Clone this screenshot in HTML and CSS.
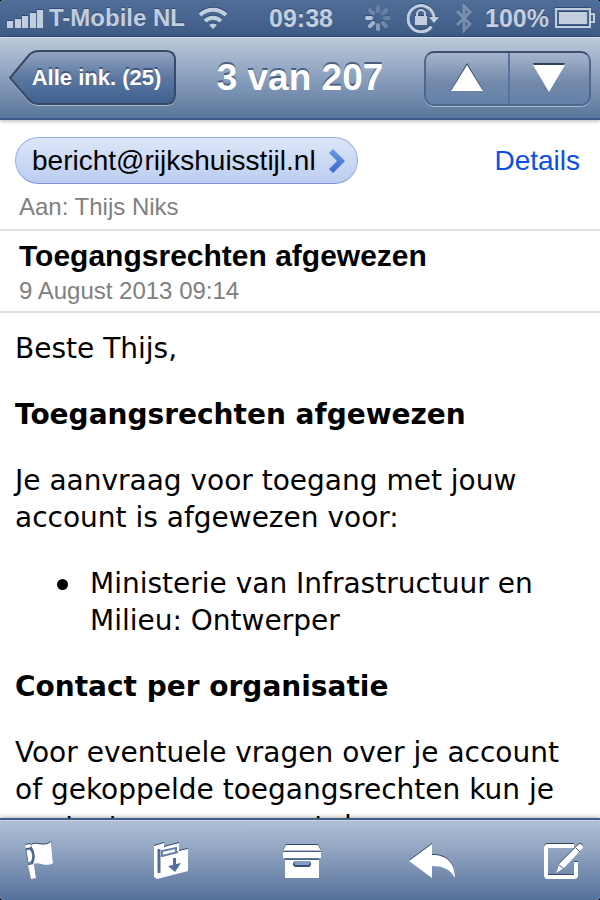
FILE: index.html
```html
<!DOCTYPE html>
<html lang="nl">
<head>
<meta charset="utf-8">
<title>Mail</title>
<link rel="stylesheet" href="styles.css">
</head>
<body>
<div class="phone">
  <div class="status">
    <div class="status-group">
      <svg class="signal" width="37" height="19" viewBox="0 0 37 19"><path d="M0 12h6v7H0zM8 10h6v9H8zM15 7h6v12h-6zM23 4h6v15h-6zM30 1h6v18h-6z"/></svg>
      <span class="carrier">T-Mobile NL</span>
      <svg width="30" height="22" viewBox="0 0 30 22"><g fill="none" stroke="currentColor" stroke-width="4"><path d="M2 8a18.500 18.500 0 0 1 26 0"/><path d="M7 14a11.500 11.500 0 0 1 16 0"/></g><path d="M15 22l-4-4a6 6 0 0 1 8 0z"/></svg>
    </div>
    <span class="clock">09:38</span>
    <div class="status-group right">
      <svg width="26" height="26" viewBox="-13 -13 26 26" fill="none" stroke="currentColor" stroke-width="4" stroke-linecap="round"><path d="M0-11v4" opacity=".3"/><path d="M8-8L5-5" opacity=".3"/><path d="M11 0H7" opacity=".3"/><path d="M8 8L5 5" opacity=".4"/><path d="M0 11V7" opacity=".6"/><path d="M-8 8l3-3" opacity=".8"/><path d="M-11 0h4" opacity=".95"/><path d="M-8-8l3 3" opacity=".35"/></svg>
      <svg class="lock" width="32" height="30" viewBox="0 0 32 30"><path d="M24.500 23.500A13 13 0 1 1 27 14" fill="none" stroke="currentColor" stroke-width="3"/><path d="M22 14h10l-5 6zM8 13h12v9H8z"/><path d="M10 13v-2a4 4 0 0 1 8 0v2" fill="none" stroke="currentColor" stroke-width="2"/></svg>
      <svg class="bluetooth" width="18" height="30" viewBox="0 0 18 30"><path d="M2 8l13 13-6 6V3l6 6L2 22" fill="none" stroke="currentColor" stroke-width="3"/></svg>
      <span class="percent">100%</span>
      <svg width="40" height="20" viewBox="0 0 40 20"><path d="M1 1h34v18H1zM36 6h3v8h-3" fill="none" stroke="currentColor" stroke-width="2"/><path d="M4 4h28v12H4z"/></svg>
    </div>
  </div>
  <header class="nav">
    <button class="back">
      <svg class="back-shape" width="167" height="56" viewBox="0 0 167 56">
        <defs><linearGradient id="backfill" x2="0" y2="1"><stop stop-color="#94a5c1"/><stop offset=".5" stop-color="#5b78a2"/><stop offset="1" stop-color="#3e5f90"/></linearGradient></defs>
        <path d="M1 29L20 6Q24 2 30 2h127q9 0 9 9v35q0 9-9 9H30q-6 0-10-4z" fill="none" stroke="#a7b9d2" stroke-width="2"/>
        <path d="M1 28L20 5Q24 1 30 1h127q9 0 9 9v35q0 9-9 9H30q-6 0-10-4z" fill="url(#backfill)" stroke="#3a4a65" stroke-width="2"/>
      </svg>
      <span class="back-label">Alle ink. (25)</span>
    </button>
    <h1 class="title">3 van 207</h1>
    <div class="segments">
      <button class="segment" aria-label="Vorige"><svg width="34" height="30" viewBox="0 0 34 30"><path class="edge" d="M17 0l16 27H1z"/><path d="M17 2l16 26H1z"/></svg></button>
      <button class="segment" aria-label="Volgende"><svg width="34" height="30" viewBox="0 0 34 30"><path class="edge" d="M1 0h32L17 27z"/><path d="M1 2h32L17 29z"/></svg></button>
    </div>
  </header>
  <main class="message">
    <section class="people">
      <div class="from">
        <button class="sender">bericht@rijkshuisstijl.nl
          <svg width="18" height="26" viewBox="0 0 18 26"><defs><linearGradient id="chev" x2="0" y2="1"><stop stop-color="#6c9ae6"/><stop offset="1" stop-color="#3769d3"/></linearGradient></defs><path d="M5 1l12 12L5 25l-4-4 8-8-8-8z" fill="url(#chev)"/></svg>
        </button>
        <a class="details" href="#">Details</a>
      </div>
      <p class="meta">Aan: Thijs Niks</p>
    </section>
    <section class="subject">
      <h2 class="subject-title">Toegangsrechten afgewezen</h2>
      <p class="meta">9 August 2013 09:14</p>
    </section>
    <article class="body">
      <p>Beste Thijs,</p>
      <h3>Toegangsrechten afgewezen</h3>
      <p>Je aanvraag voor toegang met jouw account is afgewezen voor:</p>
      <ul><li>Ministerie van Infrastructuur en Milieu: Ontwerper</li></ul>
      <h3>Contact per organisatie</h3>
      <p>Voor eventuele vragen over je account of gekoppelde toegangsrechten kun je contact opnemen met de</p>
    </article>
  </main>
  <footer class="toolbar">
    <button class="tool" aria-label="Markeer"><svg width="32" height="40" viewBox="0 0 32 40"><path d="M1 4l5-1 1 3-5 1zM4 24l6-1 2 14-5 1zM7 4c7-4 12 3 20-3l2 21c-8 5-13-2-20 1q3-10-2-19"/><path d="M2 9l4-1q5 7 1 13l-3 1z" stroke="#5b77a0" stroke-width="1"/><path d="M7 7q5 8 1 15" fill="none" stroke="#49678f" stroke-width="2"/></svg></button>
    <button class="tool" aria-label="Verplaats"><svg width="36" height="38" viewBox="0 0 36 38"><path d="M1 4l10-3v4l15-4v8l9-2v22L4 37l-3-2z"/><path d="M6 7v24" fill="none" stroke="#526f98" stroke-width="3"/><path d="M9 15V9l14-3v4M9 14l16-4" fill="none" stroke="#6581aa" stroke-width="2"/><path d="M20 16h3v6l5-1-6 9-7-6 5-1z" fill="#526f98"/></svg></button>
    <button class="tool" aria-label="Archiveer"><svg width="40" height="36" viewBox="0 0 40 36"><path d="M4 2h32l3 6H1zM1 9h38v6H1zM3 17h34v18H3z"/><path d="M2 8h36M3 16h34" stroke="#637b9e" stroke-width="1"/><rect x="11" y="18" width="18" height="6" rx="3" fill="#344e76"/><rect x="12" y="18" width="16" height="4" rx="2" fill="#829bc0"/></svg></button>
    <button class="tool" aria-label="Antwoord"><svg width="48" height="36" viewBox="0 0 48 36"><path d="M1 18L24 1v11c15 0 23 8 23 23-5-9-12-12-23-12v12z"/></svg></button>
    <button class="tool" aria-label="Nieuw bericht"><svg width="40" height="38" viewBox="0 0 40 38"><path d="M31 4H5q-2 0-2 2v27q0 2 2 2h26q2 0 2-2V20" fill="none" stroke="currentColor" stroke-width="4"/><path d="M13 31l3-9L35 3q2-2 4 0t0 4L21 26z"/><path d="M16 23l5 4M33 6l4 4" stroke="#405d87" stroke-width="1"/></svg></button>
  </footer>
</div>
</body>
</html>
```
FILE: styles.css
```css
* { box-sizing: border-box; }
body, h1, h2, h3, p, ul { margin: 0; padding: 0; }
body { background: #000; font-family: "Liberation Sans", Arial, sans-serif; }
button { border: 0; padding: 0; background: none; color: inherit; font: inherit; cursor: pointer; }
svg { display: block; flex: none; fill: currentColor; }

.phone { height: 100vh; display: flex; flex-direction: column; overflow: hidden; border-radius: 4px; background: #fff; }

.status {
  flex: none; height: 37px; padding: 0 5px 0 7px;
  display: grid; grid-template-columns: 1fr auto 1fr; align-items: center;
  background: linear-gradient(#4f6e98, #3e5b84);
  border-bottom: 1px solid #344f77;
  color: #c2cddd; font-size: 25px; font-weight: bold; line-height: 36px;
}
.status svg { filter: drop-shadow(0 -1px 0 #2f4a72); }
.status span { text-shadow: 0 -1px 0 #2f4a72; }
.status-group { display: flex; align-items: center; gap: 5px; }
.carrier { margin-right: 8px; font-size: 24px; white-space: nowrap; }
.right { justify-content: flex-end; gap: 6px; }
.lock { margin-left: 10px; }
.bluetooth { margin: 0 6px 0 10px; opacity: .4; }

.nav {
  flex: none; height: 83px; padding: 0 9px;
  display: grid; grid-template-columns: 167px 1fr 167px; align-items: center; gap: 30px;
  background: linear-gradient(#bcc9da, #8a9fbe 50%, #597599);
  border-top: 1px solid #d5dfeb; border-bottom: 2px solid #3b5a86;
  color: #fff; position: relative; z-index: 1;
  box-shadow: 0 1px 4px rgba(0, 0, 0, .3);
}
.back { display: grid; align-items: center; }
.back-shape, .back-label { grid-area: 1 / 1; }
.back-label { padding-left: 8px; font-size: 22px; font-weight: bold; text-shadow: 0 -2px 0 #3f5780; }
.title { font-size: 37px; line-height: 48px; white-space: nowrap; text-align: center; text-shadow: 0 -2px 0 #4b5f80; }
.segments {
  height: 55px; display: grid; grid-template-columns: 1fr 1fr;
  border: 2px solid #50668a; border-top-color: #3f4f69; border-radius: 10px;
  background: linear-gradient(#a5b5ce, #7188aa 60%, #6481ab);
  box-shadow: 0 1px 0 #a7b9d2;
}
.segment { display: grid; place-items: center; }
.segment + .segment { border-left: 2px solid #5572a0; }
.edge { fill: #33435d; }

.message { flex: 1; min-height: 0; overflow: hidden; color: #000; }
.people { padding: 17px 20px 8px 15px; border-bottom: 2px solid #e0e0e0; }
.from { display: flex; align-items: center; justify-content: space-between; }
.sender {
  height: 47px; padding: 0 11px 0 16px; display: flex; align-items: center; gap: 12px;
  border: 1px solid #94aeea; border-bottom-color: #8494dc; border-radius: 24px;
  background: linear-gradient(#dce6f7, #bccdf1);
  font-size: 28px;
}
.details { color: #0a50e6; font-size: 28px; text-decoration: none; }
.meta { color: #808080; font-size: 24px; line-height: 28px; }
.people .meta { padding: 9px 0 0 4px; }
.subject { padding: 7px 19px 6px; border-bottom: 2px solid #e0e0e0; }
.subject-title { margin-bottom: 3px; font-size: 30px; line-height: 36px; }

.body { padding: 17px 15px 0; font-family: "DejaVu Sans", Verdana, sans-serif; font-size: 28px; line-height: 37px; }
.body > * { margin-bottom: 29px; }
.body h3 { font-size: 28px; }
.body ul { padding-left: 42px; list-style: none; }
.body li { display: flex; gap: 22px; }
.body li::before { content: ""; flex: none; width: 11px; height: 11px; margin-top: 14px; border-radius: 50%; background: #000; }

.toolbar {
  flex: none; height: 82px; padding: 2px 13px 0 16px;
  display: flex; align-items: center; justify-content: space-between;
  background: linear-gradient(#b0c0d6, #8fa3c0 40%, #547099);
  border-top: 2px solid #3e5d85; box-shadow: inset 0 1px 0 #c8d4e3, 0 -1px 4px rgba(0, 0, 0, .3);
  color: #fff; position: relative;
}
.tool { width: 48px; display: grid; justify-items: center; }
.tool svg { filter: drop-shadow(0 -1px 0 #35496a); }
```
